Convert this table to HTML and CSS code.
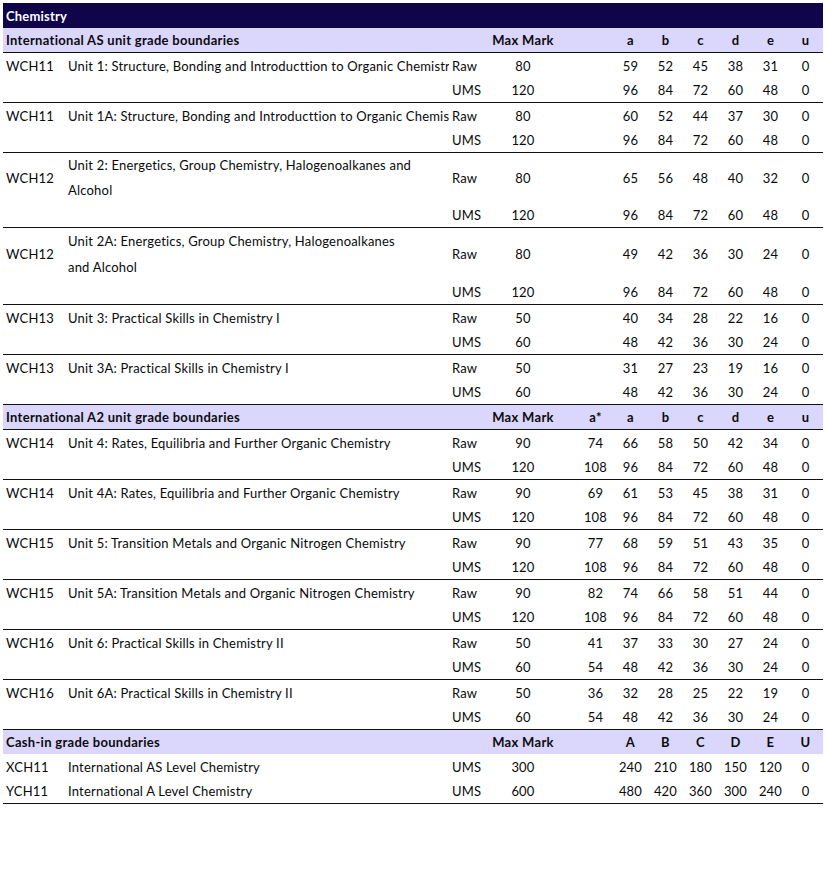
FILE: index.html
```html
<!DOCTYPE html>
<html lang="en">
<head>
<meta charset="utf-8">
<title>Chemistry grade boundaries</title>
<link rel="stylesheet" href="styles.css">
</head>
<body>
<table class="grades">
  <colgroup>
    <col class="c-code"><col class="c-title"><col class="c-type"><col class="c-max"><col class="c-gap">
    <col class="c-g"><col class="c-g"><col class="c-g"><col class="c-g"><col class="c-g"><col class="c-g"><col class="c-g">
  </colgroup>
  <tbody>
    <tr class="subject"><td colspan="12">Chemistry</td></tr>

    <tr class="section ruled">
      <td colspan="2">International AS unit grade boundaries</td><td></td><td class="num">Max Mark</td><td></td>
      <td class="num"></td><td class="num">a</td><td class="num">b</td><td class="num">c</td><td class="num">d</td><td class="num">e</td><td class="num">u</td>
    </tr>

    <tr><td>WCH11</td><td class="clip">Unit 1: Structure, Bonding and Introducttion to Organic Chemistry</td><td>Raw</td><td class="num">80</td><td></td><td class="num"></td><td class="num">59</td><td class="num">52</td><td class="num">45</td><td class="num">38</td><td class="num">31</td><td class="num">0</td></tr>
    <tr class="ruled"><td></td><td></td><td>UMS</td><td class="num">120</td><td></td><td class="num"></td><td class="num">96</td><td class="num">84</td><td class="num">72</td><td class="num">60</td><td class="num">48</td><td class="num">0</td></tr>

    <tr><td>WCH11</td><td class="clip">Unit 1A: Structure, Bonding and Introducttion to Organic Chemistry</td><td>Raw</td><td class="num">80</td><td></td><td class="num"></td><td class="num">60</td><td class="num">52</td><td class="num">44</td><td class="num">37</td><td class="num">30</td><td class="num">0</td></tr>
    <tr class="ruled"><td></td><td></td><td>UMS</td><td class="num">120</td><td></td><td class="num"></td><td class="num">96</td><td class="num">84</td><td class="num">72</td><td class="num">60</td><td class="num">48</td><td class="num">0</td></tr>

    <tr class="tall"><td>WCH12</td><td class="wrap">Unit 2: Energetics, Group Chemistry, Halogenoalkanes and<br>Alcohol</td><td>Raw</td><td class="num">80</td><td></td><td class="num"></td><td class="num">65</td><td class="num">56</td><td class="num">48</td><td class="num">40</td><td class="num">32</td><td class="num">0</td></tr>
    <tr class="ruled"><td></td><td></td><td>UMS</td><td class="num">120</td><td></td><td class="num"></td><td class="num">96</td><td class="num">84</td><td class="num">72</td><td class="num">60</td><td class="num">48</td><td class="num">0</td></tr>

    <tr class="taller"><td>WCH12</td><td class="wrap">Unit 2A: Energetics, Group Chemistry, Halogenoalkanes<br>and Alcohol</td><td>Raw</td><td class="num">80</td><td></td><td class="num"></td><td class="num">49</td><td class="num">42</td><td class="num">36</td><td class="num">30</td><td class="num">24</td><td class="num">0</td></tr>
    <tr class="ruled"><td></td><td></td><td>UMS</td><td class="num">120</td><td></td><td class="num"></td><td class="num">96</td><td class="num">84</td><td class="num">72</td><td class="num">60</td><td class="num">48</td><td class="num">0</td></tr>

    <tr><td>WCH13</td><td class="clip">Unit 3: Practical Skills in Chemistry I</td><td>Raw</td><td class="num">50</td><td></td><td class="num"></td><td class="num">40</td><td class="num">34</td><td class="num">28</td><td class="num">22</td><td class="num">16</td><td class="num">0</td></tr>
    <tr class="ruled"><td></td><td></td><td>UMS</td><td class="num">60</td><td></td><td class="num"></td><td class="num">48</td><td class="num">42</td><td class="num">36</td><td class="num">30</td><td class="num">24</td><td class="num">0</td></tr>

    <tr><td>WCH13</td><td class="clip">Unit 3A: Practical Skills in Chemistry I</td><td>Raw</td><td class="num">50</td><td></td><td class="num"></td><td class="num">31</td><td class="num">27</td><td class="num">23</td><td class="num">19</td><td class="num">16</td><td class="num">0</td></tr>
    <tr class="ruled"><td></td><td></td><td>UMS</td><td class="num">60</td><td></td><td class="num"></td><td class="num">48</td><td class="num">42</td><td class="num">36</td><td class="num">30</td><td class="num">24</td><td class="num">0</td></tr>

    <tr class="section ruled">
      <td colspan="2">International A2 unit grade boundaries</td><td></td><td class="num">Max Mark</td><td></td>
      <td class="num">a*</td><td class="num">a</td><td class="num">b</td><td class="num">c</td><td class="num">d</td><td class="num">e</td><td class="num">u</td>
    </tr>

    <tr><td>WCH14</td><td class="clip">Unit 4: Rates, Equilibria and Further Organic Chemistry</td><td>Raw</td><td class="num">90</td><td></td><td class="num">74</td><td class="num">66</td><td class="num">58</td><td class="num">50</td><td class="num">42</td><td class="num">34</td><td class="num">0</td></tr>
    <tr class="ruled"><td></td><td></td><td>UMS</td><td class="num">120</td><td></td><td class="num">108</td><td class="num">96</td><td class="num">84</td><td class="num">72</td><td class="num">60</td><td class="num">48</td><td class="num">0</td></tr>

    <tr><td>WCH14</td><td class="clip">Unit 4A: Rates, Equilibria and Further Organic Chemistry</td><td>Raw</td><td class="num">90</td><td></td><td class="num">69</td><td class="num">61</td><td class="num">53</td><td class="num">45</td><td class="num">38</td><td class="num">31</td><td class="num">0</td></tr>
    <tr class="ruled"><td></td><td></td><td>UMS</td><td class="num">120</td><td></td><td class="num">108</td><td class="num">96</td><td class="num">84</td><td class="num">72</td><td class="num">60</td><td class="num">48</td><td class="num">0</td></tr>

    <tr><td>WCH15</td><td class="clip">Unit 5: Transition Metals and Organic Nitrogen Chemistry</td><td>Raw</td><td class="num">90</td><td></td><td class="num">77</td><td class="num">68</td><td class="num">59</td><td class="num">51</td><td class="num">43</td><td class="num">35</td><td class="num">0</td></tr>
    <tr class="ruled"><td></td><td></td><td>UMS</td><td class="num">120</td><td></td><td class="num">108</td><td class="num">96</td><td class="num">84</td><td class="num">72</td><td class="num">60</td><td class="num">48</td><td class="num">0</td></tr>

    <tr><td>WCH15</td><td class="clip">Unit 5A: Transition Metals and Organic Nitrogen Chemistry</td><td>Raw</td><td class="num">90</td><td></td><td class="num">82</td><td class="num">74</td><td class="num">66</td><td class="num">58</td><td class="num">51</td><td class="num">44</td><td class="num">0</td></tr>
    <tr class="ruled"><td></td><td></td><td>UMS</td><td class="num">120</td><td></td><td class="num">108</td><td class="num">96</td><td class="num">84</td><td class="num">72</td><td class="num">60</td><td class="num">48</td><td class="num">0</td></tr>

    <tr><td>WCH16</td><td class="clip">Unit 6: Practical Skills in Chemistry II</td><td>Raw</td><td class="num">50</td><td></td><td class="num">41</td><td class="num">37</td><td class="num">33</td><td class="num">30</td><td class="num">27</td><td class="num">24</td><td class="num">0</td></tr>
    <tr class="ruled"><td></td><td></td><td>UMS</td><td class="num">60</td><td></td><td class="num">54</td><td class="num">48</td><td class="num">42</td><td class="num">36</td><td class="num">30</td><td class="num">24</td><td class="num">0</td></tr>

    <tr><td>WCH16</td><td class="clip">Unit 6A: Practical Skills in Chemistry II</td><td>Raw</td><td class="num">50</td><td></td><td class="num">36</td><td class="num">32</td><td class="num">28</td><td class="num">25</td><td class="num">22</td><td class="num">19</td><td class="num">0</td></tr>
    <tr class="ruled"><td></td><td></td><td>UMS</td><td class="num">60</td><td></td><td class="num">54</td><td class="num">48</td><td class="num">42</td><td class="num">36</td><td class="num">30</td><td class="num">24</td><td class="num">0</td></tr>

    <tr class="section">
      <td colspan="2">Cash-in grade boundaries</td><td></td><td class="num">Max Mark</td><td></td>
      <td class="num"></td><td class="num">A</td><td class="num">B</td><td class="num">C</td><td class="num">D</td><td class="num">E</td><td class="num">U</td>
    </tr>

    <tr><td>XCH11</td><td class="clip">International AS Level Chemistry</td><td>UMS</td><td class="num">300</td><td></td><td class="num"></td><td class="num">240</td><td class="num">210</td><td class="num">180</td><td class="num">150</td><td class="num">120</td><td class="num">0</td></tr>
    <tr class="ruled"><td>YCH11</td><td class="clip">International A Level Chemistry</td><td>UMS</td><td class="num">600</td><td></td><td class="num"></td><td class="num">480</td><td class="num">420</td><td class="num">360</td><td class="num">300</td><td class="num">240</td><td class="num">0</td></tr>
  </tbody>
</table>
</body>
</html>
```

FILE: styles.css
```css
html, body {
  background: #ffffff;
}

body {
  margin: 0;
  padding: 3px;
  font-family: Lato, "Open Sans", "Liberation Sans", sans-serif;
  font-size: 13px;
  letter-spacing: 0.2px;
  color: #0a0a0a;
}

.grades {
  border-collapse: collapse;
  table-layout: fixed;
  width: 820px;
}

.c-code { width: 62px; }
.c-title { width: 384px; }
.c-type { width: 41px; }
.c-max { width: 66px; }
.c-gap { width: 22px; }
.c-g { width: 35px; }

.grades td {
  height: 25px;
  padding: 0 3px;
  vertical-align: middle;
  white-space: nowrap;
  overflow: hidden;
  line-height: 16px;
}

.grades .num {
  text-align: center;
  padding: 0;
}

.grades .clip {
  overflow: hidden;
  text-overflow: clip;
}

.grades .wrap {
  white-space: normal;
}

.tall td { height: 50px; }
.tall .wrap { line-height: 25px; }

.taller td { height: 52px; }
.taller .wrap { line-height: 26px; }

.subject td {
  background: #10044a;
  color: #ffffff;
  font-weight: 700;
  height: 25px;
}

.section td {
  background: #dbd6fc;
  font-weight: 700;
  letter-spacing: 0.3px;
  height: 24px;
  color: #0c0c0c;
}

.ruled td {
  height: 24px;
  border-bottom: 1px solid #111111;
}

.section.ruled td {
  height: 24px;
}
```
